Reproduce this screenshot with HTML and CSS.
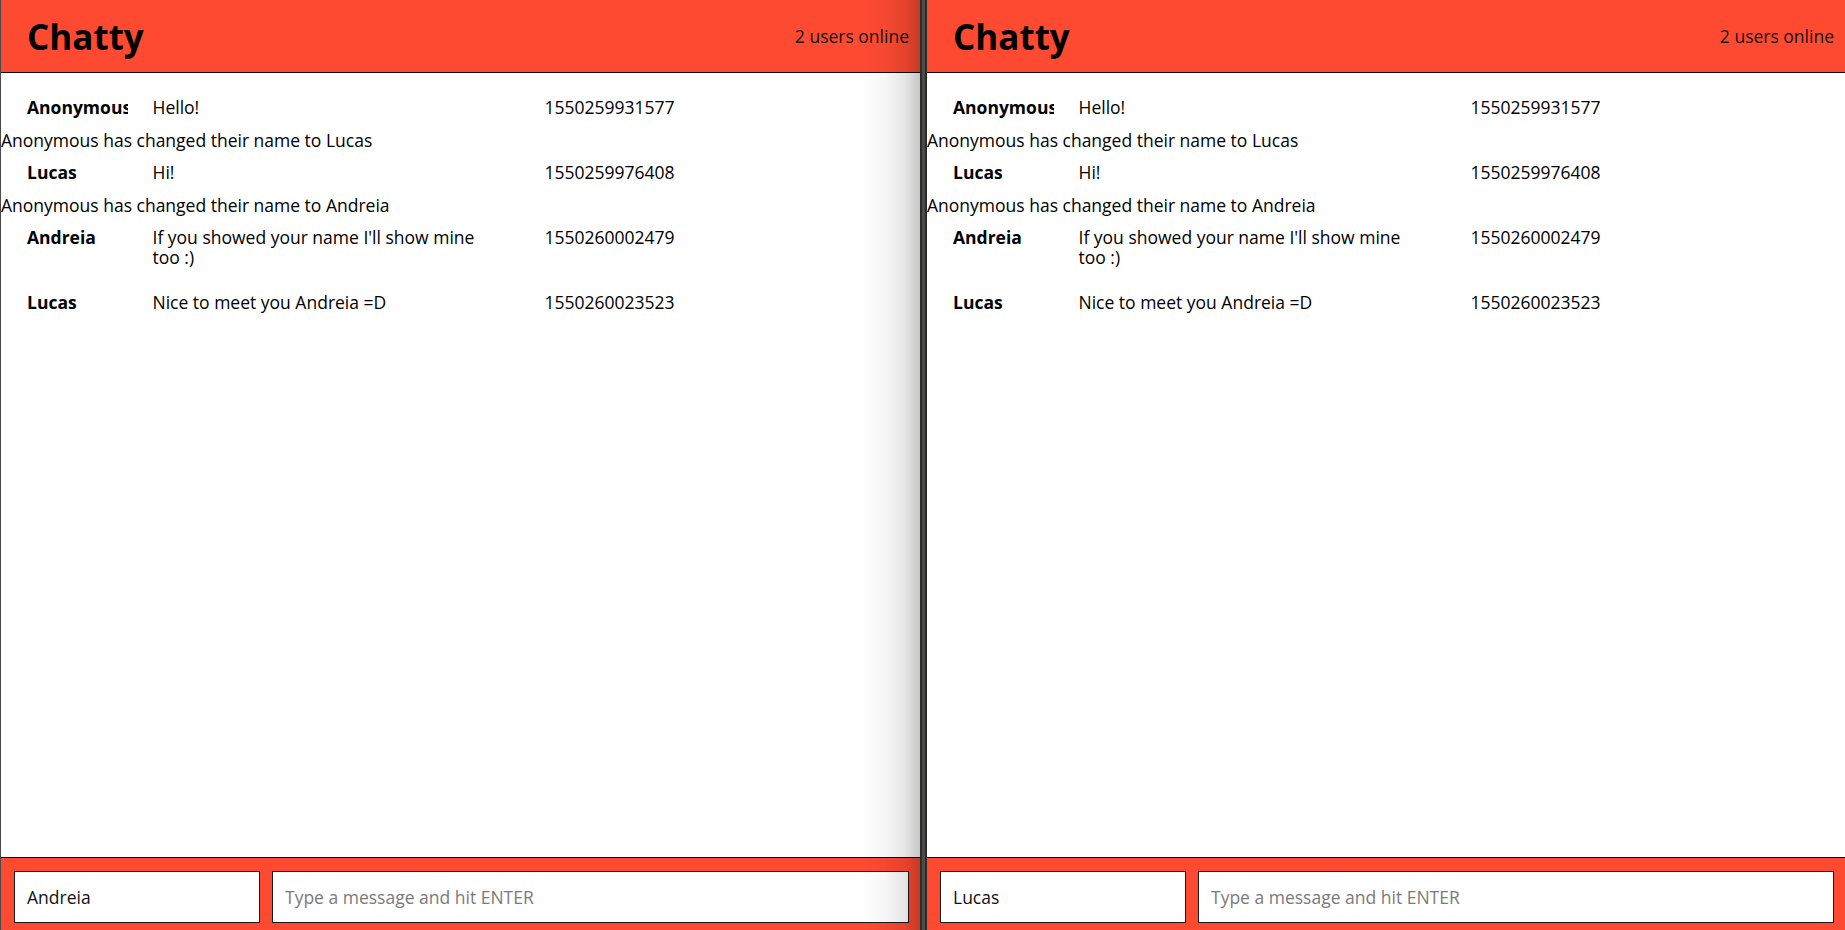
FILE: index.html
```html
<!DOCTYPE html>
<html lang="en">
<head>
<meta charset="utf-8">
<title>Chatty</title>
<link rel="stylesheet" href="styles.css">
</head>
<body>
<div class="desktop">
  <div class="window window--left">
    <header class="navbar">
      <h1 class="brand">Chatty</h1>
      <span class="online">2 users online</span>
    </header>
    <main class="messages">
      <div class="message"><span class="message-username">Anonymous</span><span class="message-content">Hello!</span><span class="message-time">1550259931577</span></div>
      <div class="notification">Anonymous has changed their name to Lucas</div>
      <div class="message"><span class="message-username">Lucas</span><span class="message-content">Hi!</span><span class="message-time">1550259976408</span></div>
      <div class="notification">Anonymous has changed their name to Andreia</div>
      <div class="message"><span class="message-username">Andreia</span><span class="message-content">If you showed your name I'll show mine too :)</span><span class="message-time">1550260002479</span></div>
      <div class="message"><span class="message-username">Lucas</span><span class="message-content">Nice to meet you Andreia =D</span><span class="message-time">1550260023523</span></div>
    </main>
    <footer class="chatbar">
      <input class="chatbar-username" type="text" value="Andreia">
      <input class="chatbar-message" type="text" placeholder="Type a message and hit ENTER">
    </footer>
  </div>
  <div class="divider"></div>
  <div class="window window--right">
    <header class="navbar">
      <h1 class="brand">Chatty</h1>
      <span class="online">2 users online</span>
    </header>
    <main class="messages">
      <div class="message"><span class="message-username">Anonymous</span><span class="message-content">Hello!</span><span class="message-time">1550259931577</span></div>
      <div class="notification">Anonymous has changed their name to Lucas</div>
      <div class="message"><span class="message-username">Lucas</span><span class="message-content">Hi!</span><span class="message-time">1550259976408</span></div>
      <div class="notification">Anonymous has changed their name to Andreia</div>
      <div class="message"><span class="message-username">Andreia</span><span class="message-content">If you showed your name I'll show mine too :)</span><span class="message-time">1550260002479</span></div>
      <div class="message"><span class="message-username">Lucas</span><span class="message-content">Nice to meet you Andreia =D</span><span class="message-time">1550260023523</span></div>
    </main>
    <footer class="chatbar">
      <input class="chatbar-username" type="text" value="Lucas">
      <input class="chatbar-message chatbar-message--active" type="text" placeholder="Type a message and hit ENTER">
    </footer>
  </div>
</div>
</body>
</html>
```

FILE: styles.css
```css
* {
  box-sizing: border-box;
}

html, body {
  margin: 0;
  padding: 0;
  height: 100%;
  overflow: hidden;
  background: #ffffff;
}

body {
  font-family: "Open Sans", "Noto Sans", sans-serif;
  font-size: 17.5px;
  color: #000;
}

.desktop {
  display: flex;
  height: 930px;
  width: 1845px;
}

.window {
  display: flex;
  flex-direction: column;
  height: 930px;
  background: #fff;
}

.window--left {
  width: 920px;
  border-left: 1px solid #4a4a4a;
  position: relative;
}

.window--left::after {
  content: "";
  position: absolute;
  top: 0;
  right: 0;
  bottom: 0;
  width: 60px;
  pointer-events: none;
  background: linear-gradient(to right, rgba(0,0,0,0) 0%, rgba(0,0,0,0.03) 40%, rgba(0,0,0,0.1) 75%, rgba(0,0,0,0.22) 100%);
}

.window--right {
  flex: 1;
}

.divider {
  width: 7px;
  height: 930px;
  background: #4b4b48;
  border-left: 2px solid #2c2c2c;
  border-right: 2px solid #2c2c2c;
}

.navbar {
  height: 73px;
  flex-shrink: 0;
  background: #ff4a32;
  border-bottom: 1px solid #000;
  display: flex;
  align-items: center;
  justify-content: space-between;
  padding: 0 11px 0 26px;
}

.brand {
  margin: 0;
  font-size: 35px;
  font-weight: 700;
  line-height: 1;
  color: #000;
}

.online {
  font-size: 17.5px;
  color: #141414;
}

.messages {
  flex: 1;
  padding-top: 11.5px;
  overflow: hidden;
}

.message {
  display: flex;
  align-items: flex-start;
  padding: 12.5px 0 12.5px 26px;
  line-height: 20px;
}

.message-username {
  width: 101px;
  flex-shrink: 0;
  font-weight: 700;
  white-space: nowrap;
  overflow-x: clip;
  overflow-y: visible;
}

.message-content {
  width: 340px;
  flex-shrink: 0;
  margin-left: 24.5px;
}

.message-time {
  margin-left: 52px;
}

.notification {
  line-height: 20px;
  padding-left: 0;
}

.chatbar {
  height: 73px;
  flex-shrink: 0;
  background: #ff4a32;
  border-top: 1px solid #000;
  display: flex;
  align-items: flex-start;
  gap: 12px;
  padding: 13px 11px 0 13px;
}

.chatbar input {
  height: 52px;
  border: 1px solid #1a1a1a;
  border-radius: 0;
  background: #fff;
  padding: 0 12px;
  margin: 0;
  font-family: "Open Sans", "Noto Sans", sans-serif;
  font-size: 17.5px;
  color: #111;
  outline: none;
}

.chatbar input::placeholder {
  color: #7a7a7a;
}

.chatbar-username {
  width: 246px;
  flex-shrink: 0;
}

.chatbar-message {
  flex: 1;
  min-width: 0;
}

.chatbar-message--active {
  border-color: #7a4030;
}
```
